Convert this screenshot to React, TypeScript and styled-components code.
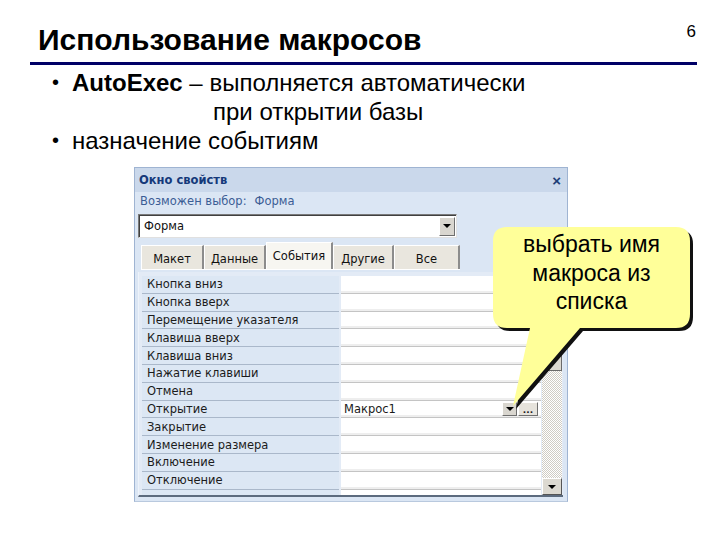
import styled, { createGlobalStyle } from 'styled-components'

const GlobalStyle = createGlobalStyle`
  html, body { margin: 0; padding: 0; background: #fff; }
  body { font-family: "Liberation Sans", Arial, sans-serif; }
`

const Slide = styled.div`
  position: relative;
  width: 720px;
  height: 540px;
  overflow: hidden;
  background: #fff;
  color: #000;
`

const Header = styled.header`
  display: flex;
  justify-content: space-between;
  align-items: flex-start;
  height: 62px;
  padding: 0 24px 0 38px;
  box-sizing: border-box;
`

const Title = styled.h1`
  margin: 24px 0 0;
  font-size: 30px;
  line-height: 32px;
  font-weight: bold;
`

const PageNum = styled.span`
  margin-top: 22px;
  font-family: "Liberation Sans Narrow", "Liberation Sans", sans-serif;
  font-size: 17px;
  line-height: 20px;
`

const Rule = styled.div`
  margin: 0 23px 0 30px;
  height: 3px;
  background: #000066;
`

const List = styled.ul`
  list-style: none;
  margin: 3px 0 0 52px;
  padding: 0;
  font-size: 24px;
  line-height: 29px;
`

const Item = styled.li`
  display: flex;
`

const Dot = styled.span`
  width: 20px;
  flex: none;
  font-size: 20px;
`

const Continuation = styled.span`
  display: block;
  padding-left: 141px;
`

const Window = styled.div`
  margin: 12px 0 0 134px;
  width: 434px;
  height: 335px;
  box-sizing: border-box;
  border: 1px solid #9fb4d2;
  border-bottom-color: #b9c9de;
  background: #dbe6f4;
  display: flex;
  flex-direction: column;
  font-family: "DejaVu Sans", Verdana, sans-serif;
  font-size: 11.5px;
  padding-bottom: 4px;
`

const TitleBar = styled.div`
  height: 24px;
  flex: none;
  display: flex;
  align-items: center;
  justify-content: space-between;
  padding: 0 6px 0 4px;
  background: #cad8eb;
  color: #15397a;
  font-weight: bold;
`

const Close = styled.span`
  font-family: "Liberation Sans", Arial, sans-serif;
  font-size: 15px;
  color: #1d3f78;
`

const Subtitle = styled.div`
  height: 18px;
  flex: none;
  display: flex;
  align-items: center;
  gap: 8px;
  padding-left: 5px;
  color: #3b5d95;
`

const Combo = styled.div`
  margin: 4px 0 0 3px;
  width: 319px;
  height: 24px;
  flex: none;
  box-sizing: border-box;
  display: flex;
  align-items: center;
  justify-content: space-between;
  background: #fff;
  border: 1px solid #7a7a7a;
  border-right-color: #e0e0e0;
  border-bottom-color: #e0e0e0;
  box-shadow: inset 1px 1px 0 #404040;
  padding: 0 1px 0 5px;
  color: #111;
`

const DropButton = styled.span<{ small?: boolean }>`
  width: ${p => (p.small ? 15 : 16)}px;
  height: ${p => (p.small ? 14 : 19)}px;
  box-sizing: border-box;
  display: flex;
  align-items: center;
  justify-content: center;
  background: #d9d6cf;
  border: 1px solid #fff;
  border-right-color: #6e6e6e;
  border-bottom-color: #6e6e6e;
  &::after {
    content: "";
    border-left: 4px solid transparent;
    border-right: 4px solid transparent;
    border-top: 4px solid #000;
  }
`

const DotsButton = styled.span`
  width: 20px;
  height: 14px;
  box-sizing: border-box;
  display: flex;
  align-items: flex-end;
  justify-content: center;
  background: #e6e3dc;
  border: 1px solid #fff;
  border-right-color: #6e6e6e;
  border-bottom-color: #6e6e6e;
  font-size: 9px;
  line-height: 9px;
  font-weight: bold;
`

const Tabs = styled.div`
  margin: 6px 0 0 6px;
  height: 25px;
  flex: none;
  display: flex;
  align-items: flex-end;
  align-self: flex-start;
  border-bottom: 1px solid #fff;
`

const Tab = styled.div<{ w: number; active?: boolean }>`
  width: ${p => p.w}px;
  height: ${p => (p.active ? 27 : 24)}px;
  box-sizing: border-box;
  display: flex;
  align-items: center;
  justify-content: center;
  background: ${p => (p.active ? '#f7f6f1' : '#e9e6de')};
  border-left: 1px solid #fff;
  border-top: 1px solid #fff;
  border-right: 2px solid #8c8c8c;
  color: #111;
  padding-top: ${p => (p.active ? 0 : 2)}px;
`

const Panel = styled.div`
  margin: 2px 4px 0 3px;
  flex: 1;
  display: flex;
  padding: 4px 4px 0 3px;
  border-left: 1px solid #eef3fa;
  border-bottom: 2px solid #5c6b7e;
  background: #e3ebf6;
  overflow: hidden;
`

const Grid = styled.div`
  flex: 1;
  display: grid;
  grid-template-columns: 197px 200px;
  grid-auto-rows: 17.8px;
  column-gap: 2px;
  align-content: start;
`

const LabelCell = styled.div`
  display: flex;
  align-items: center;
  padding-left: 5px;
  background: #dce7f4;
  border-bottom: 1px solid #aab8ca;
  color: #1b1b1b;
  white-space: nowrap;
`

const ValueCell = styled.div`
  display: flex;
  align-items: center;
  justify-content: space-between;
  padding: 0 3px 0 3px;
  background: #fff;
  border-bottom: 1px solid #c4c4c4;
  box-shadow: inset 0 -2px 0 #eeeeee;
  color: #1b1b1b;
`

const ButtonPair = styled.div`
  display: flex;
  gap: 1px;
`

const Scrollbar = styled.div`
  width: 20px;
  flex: none;
  display: flex;
  flex-direction: column;
  margin-left: 1px;
  background: repeating-conic-gradient(#ffffff 0 25%, #cfccc4 0 50%) 0 0 / 2px 2px;
`

const ScrollButton = styled.div<{ up?: boolean }>`
  height: 17px;
  flex: none;
  box-sizing: border-box;
  display: flex;
  align-items: center;
  justify-content: center;
  background: #dcd9d1;
  border: 1px solid #fff;
  border-right-color: #555;
  border-bottom-color: #555;
  &::after {
    content: "";
    border-left: 4px solid transparent;
    border-right: 4px solid transparent;
    ${p => (p.up ? 'border-bottom: 4px solid #000;' : 'border-top: 4px solid #000;')}
  }
`

const Thumb = styled.div`
  height: 78px;
  flex: none;
  box-sizing: border-box;
  background: #dcd9d1;
  border: 1px solid #fff;
  border-right-color: #6a6a6a;
  border-bottom-color: #6a6a6a;
`

const Track = styled.div`
  flex: 1;
`

const Callout = styled.div`
  position: absolute;
  left: 490px;
  top: 224px;
  width: 210px;
  height: 190px;
`

const CalloutShape = styled.svg`
  position: absolute;
  inset: 0;
`

const CalloutText = styled.div`
  position: relative;
  width: 197px;
  margin-left: 3px;
  padding-top: 6px;
  text-align: center;
  font-size: 23px;
  line-height: 28.5px;
  color: #000;
`

const rows = [
  'Кнопка вниз',
  'Кнопка вверх',
  'Перемещение указателя',
  'Клавиша вверх',
  'Клавиша вниз',
  'Нажатие клавиши',
  'Отмена',
  'Открытие',
  'Закрытие',
  'Изменение размера',
  'Включение',
  'Отключение',
  ''
]

const tabs = [
  { name: 'Макет', w: 63 },
  { name: 'Данные', w: 62 },
  { name: 'События', w: 67, active: true },
  { name: 'Другие', w: 61 },
  { name: 'Все', w: 66 }
]

const bubble =
  'M 17 3 H 186 Q 200 3 200 17 V 90 Q 200 104 186 104 H 90 L 23 182 L 40 104 H 17 Q 3 104 3 90 V 17 Q 3 3 17 3 Z'

export default function App () {
  return (
    <Slide>
      <GlobalStyle />
      <Header>
        <Title>Использование макросов</Title>
        <PageNum>6</PageNum>
      </Header>
      <Rule />
      <List>
        <Item>
          <Dot>•</Dot>
          <span>
            <b>AutoExec</b> – выполняется автоматически
            <Continuation>при открытии базы</Continuation>
          </span>
        </Item>
        <Item>
          <Dot>•</Dot>
          <span>назначение событиям</span>
        </Item>
      </List>

      <Window>
        <TitleBar>
          <span>Окно свойств</span>
          <Close>×</Close>
        </TitleBar>
        <Subtitle>
          <span>Возможен выбор:</span>
          <span>Форма</span>
        </Subtitle>
        <Combo>
          <span>Форма</span>
          <DropButton />
        </Combo>
        <Tabs>
          {tabs.map(t => (
            <Tab key={t.name} w={t.w} active={t.active}>{t.name}</Tab>
          ))}
        </Tabs>
        <Panel>
          <Grid>
            {rows.map((r, i) => [
              <LabelCell key={'l' + i}>{r}</LabelCell>,
              <ValueCell key={'v' + i}>
                {r === 'Открытие' && (
                  <>
                    <span>Макрос1</span>
                    <ButtonPair>
                      <DropButton small />
                      <DotsButton>...</DotsButton>
                    </ButtonPair>
                  </>
                )}
              </ValueCell>
            ])}
          </Grid>
          <Scrollbar>
            <ScrollButton up />
            <Thumb />
            <Track />
            <ScrollButton />
          </Scrollbar>
        </Panel>
      </Window>

      <Callout>
        <CalloutShape width='210' height='190' viewBox='0 0 210 190'>
          <path d={bubble} fill='#111' transform='translate(3 3)' />
          <path d={bubble} fill='#ffff99' />
        </CalloutShape>
        <CalloutText>
          выбрать имя<br />макроса из<br />списка
        </CalloutText>
      </Callout>
    </Slide>
  )
}
